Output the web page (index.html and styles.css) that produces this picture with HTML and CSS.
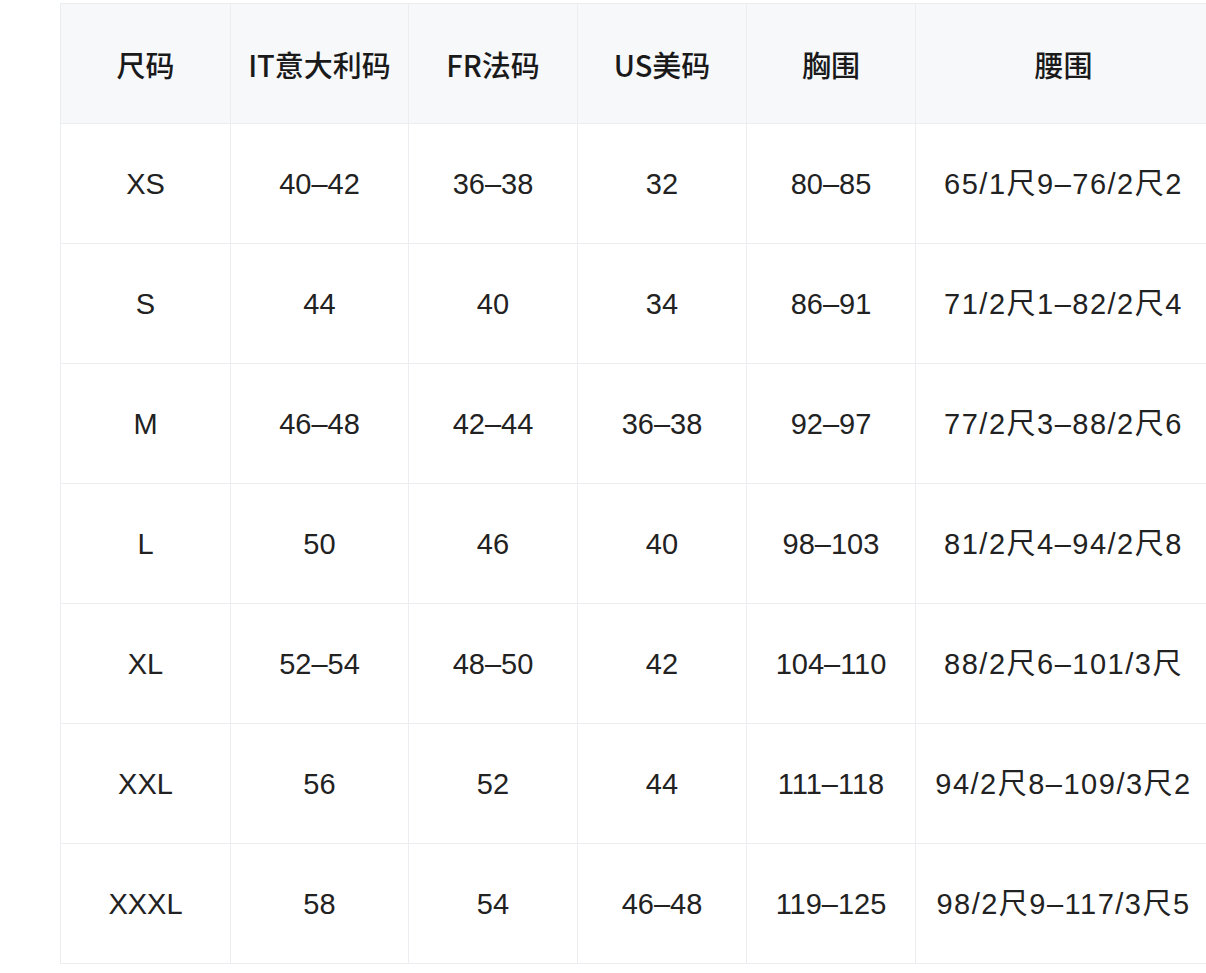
FILE: index.html
```html
<!DOCTYPE html>
<html lang="zh">
<head>
<meta charset="utf-8">
<link rel="stylesheet" href="styles.css">
</head>
<body>
<table class="size-table">
  <colgroup>
    <col class="c1"><col class="c2"><col class="c3"><col class="c4"><col class="c5"><col class="c6">
  </colgroup>
  <thead>
    <tr><th>尺码</th><th>IT意大利码</th><th>FR法码</th><th>US美码</th><th>胸围</th><th>腰围</th></tr>
  </thead>
  <tbody>
    <tr><td>XS</td><td>40–42</td><td>36–38</td><td>32</td><td>80–85</td><td class="waist">65/1尺9–76/2尺2</td></tr>
    <tr><td>S</td><td>44</td><td>40</td><td>34</td><td>86–91</td><td class="waist">71/2尺1–82/2尺4</td></tr>
    <tr><td>M</td><td>46–48</td><td>42–44</td><td>36–38</td><td>92–97</td><td class="waist">77/2尺3–88/2尺6</td></tr>
    <tr><td>L</td><td>50</td><td>46</td><td>40</td><td>98–103</td><td class="waist">81/2尺4–94/2尺8</td></tr>
    <tr><td>XL</td><td>52–54</td><td>48–50</td><td>42</td><td>104–110</td><td class="waist">88/2尺6–101/3尺</td></tr>
    <tr><td>XXL</td><td>56</td><td>52</td><td>44</td><td>111–118</td><td class="waist">94/2尺8–109/3尺2</td></tr>
    <tr><td>XXXL</td><td>58</td><td>54</td><td>46–48</td><td>119–125</td><td class="waist">98/2尺9–117/3尺5</td></tr>
  </tbody>
</table>
</body>
</html>
```
FILE: styles.css
```css
html, body {
  margin: 0;
  padding: 0;
  background: #ffffff;
  overflow: hidden;
}
body {
  font-family: "Liberation Sans", "Noto Sans CJK SC", sans-serif;
  color: #1f1f1f;
}
.size-table {
  margin: 3px 0 0 60px;
  border-collapse: collapse;
  table-layout: fixed;
  width: 1151px;
}
.c1 { width: 170px; }
.c2 { width: 178px; }
.c3 { width: 169px; }
.c4 { width: 169px; }
.c5 { width: 169px; }
.c6 { width: 296px; }
.size-table th,
.size-table td {
  border: 1px solid #ebedf0;
  height: 119px;
  padding: 0;
  text-align: center;
  vertical-align: middle;
  font-size: 29px;
  line-height: 34px;
  white-space: nowrap;
}
.size-table th {
  background: #f7f8fa;
  font-family: "Noto Sans CJK SC", "Noto Sans", sans-serif;
  font-weight: 500;
  color: #1a1a1a;
}
.size-table td {
  font-weight: 400;
  color: #222222;
}
.size-table td.waist {
  letter-spacing: 1.5px;
}
```
